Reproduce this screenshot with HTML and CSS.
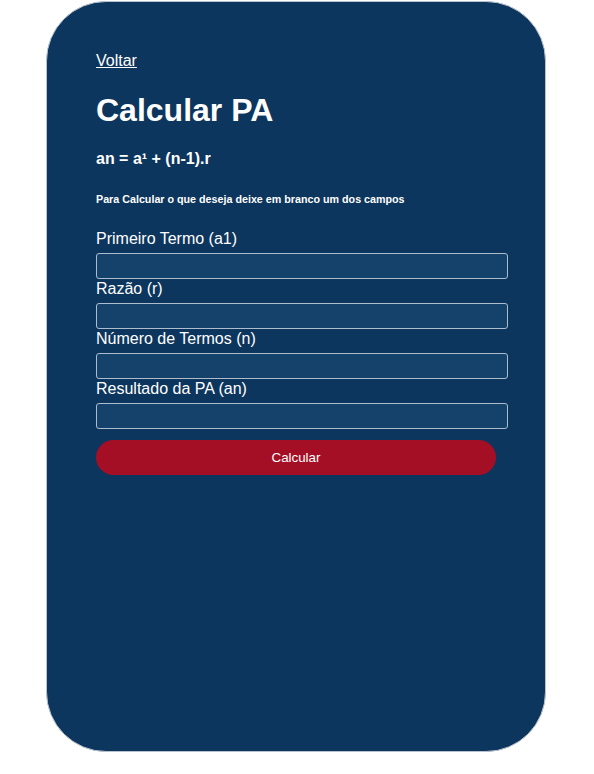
FILE: index.html
```html
<!DOCTYPE html>
<html lang="pt-BR">
<head>
<meta charset="utf-8">
<title>Calcular PA</title>
<link rel="stylesheet" href="styles.css">
</head>
<body>
<main class="card">
  <a class="back" href="#">Voltar</a>
  <h1 class="title">Calcular PA</h1>
  <h4 class="formula">an = a¹ + (n-1).r</h4>
  <h6 class="hint">Para Calcular o que deseja deixe em branco um dos campos</h6>
  <form class="form">
    <label class="label" for="a1">Primeiro Termo (a1)</label>
    <input class="field" id="a1" type="text">
    <label class="label" for="r">Razão (r)</label>
    <input class="field" id="r" type="text">
    <label class="label" for="n">Número de Termos (n)</label>
    <input class="field" id="n" type="text">
    <label class="label" for="an">Resultado da PA (an)</label>
    <input class="field" id="an" type="text">
    <button class="btn" type="button">Calcular</button>
  </form>
</main>
</body>
</html>
```

FILE: styles.css
```css
html, body {
  margin: 0;
  padding: 0;
  background: #ffffff;
}
body {
  font-family: "Liberation Sans", Arial, sans-serif;
  padding: 1px 0 0 46px;
}
.card {
  box-sizing: border-box;
  width: 500px;
  height: 751px;
  padding: 50px 50px 49px 49px;
  background: #0d365e;
  border: 1px solid #b9c2cc;
  border-radius: 60px;
  color: #ffffff;
}
.back {
  display: block;
  width: max-content;
  color: #ffffff;
  font-size: 16px;
  line-height: 18.4px;
  text-decoration: underline;
}
.title {
  font-size: 32px;
  font-weight: bold;
  margin: 21.44px 0;
  line-height: 36.8px;
}
.formula {
  font-size: 16px;
  font-weight: bold;
  margin: 21.28px 0;
  line-height: 18.4px;
}
.hint {
  font-size: 10.72px;
  font-weight: bold;
  margin: 24.97px 0 23.5px;
  line-height: 12.3px;
}
.form {
  display: flex;
  flex-direction: column;
  align-items: flex-start;
}
.label {
  display: block;
  font-size: 16px;
  line-height: 19px;
}
.field {
  box-sizing: border-box;
  width: 412px;
  height: 26px;
  margin: 5px 0 0;
  padding: 0 5px;
  background: #15426b;
  border: 1px solid #aebdcd;
  border-radius: 3px;
  color: #ffffff;
  font-family: "Liberation Sans", Arial, sans-serif;
  font-size: 13.33px;
}
.btn {
  box-sizing: border-box;
  width: 400px;
  height: 35px;
  margin-top: 11px;
  background: #a50f26;
  border: none;
  border-radius: 18px;
  color: #ffffff;
  font-family: "Liberation Sans", Arial, sans-serif;
  font-size: 13.33px;
}
```
